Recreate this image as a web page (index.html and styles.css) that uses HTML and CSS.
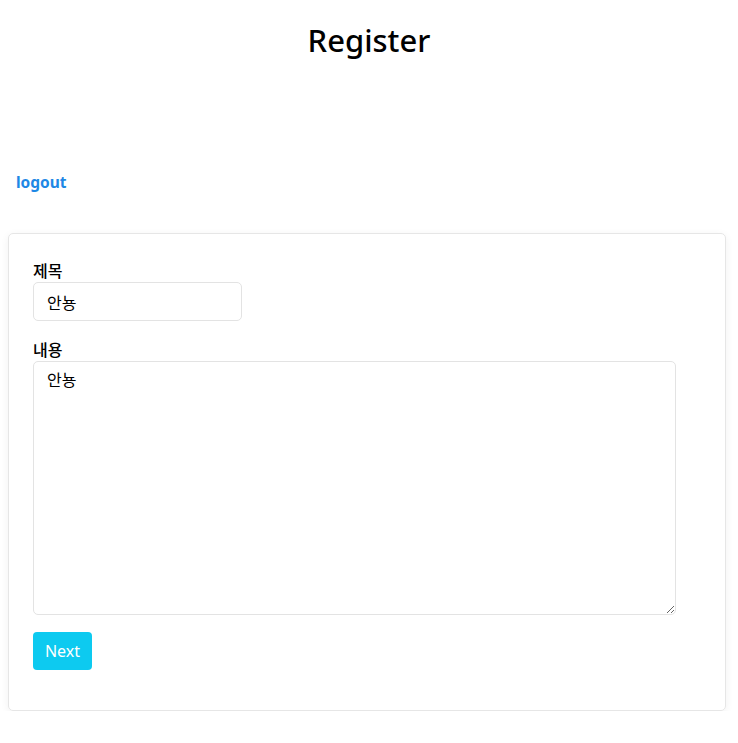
FILE: index.html
```html
<!DOCTYPE html>
<html lang="ko">
<head>
<meta charset="utf-8">
<title>Register</title>
<link rel="stylesheet" href="styles.css">
</head>
<body>
<h1 class="title">Register</h1>
<nav class="nav">
  <a class="logout" href="#">logout</a>
</nav>
<form class="card">
  <label class="label" for="title">제목</label>
  <input class="input" id="title" type="text" value="안뇽">
  <label class="label label-second" for="content">내용</label>
  <textarea class="textarea" id="content">안뇽</textarea>
  <button class="btn" type="button">Next</button>
</form>
</body>
</html>
```
FILE: styles.css
```css
html, body {
  margin: 0;
  padding: 0;
  background: #fff;
}
body {
  padding: 0 8px;
  font-family: "Noto Sans", "Noto Sans CJK KR", sans-serif;
  font-size: 16px;
  color: #000;
}
.title {
  margin: 0;
  padding-top: 18px;
  height: 46px;
  text-align: center;
  font-size: 31px;
  font-weight: 500;
  line-height: 44px;
}
.nav {
  padding: 107px 0 0 8px;
  height: 62px;
}
.logout {
  color: #1e88e5;
  font-weight: 700;
  text-decoration: none;
  font-size: 15.5px;
  line-height: 22px;
}
.card {
  display: flex;
  flex-direction: column;
  align-items: flex-start;
  margin-right: 4px;
  border: 1px solid #e6e6e6;
  border-radius: 5px;
  box-shadow: 0 2px 8px rgba(0, 0, 0, 0.06);
  padding: 25px 24px 40px;
}
.label {
  font-family: "Noto Sans CJK KR", "Noto Sans", sans-serif;
  font-size: 16px;
  font-weight: 500;
  line-height: 23px;
  margin-bottom: 0;
}
.label-second {
  margin-top: 17px;
}
.input,
.textarea {
  font-family: "Noto Sans", "Noto Sans CJK KR", sans-serif;
  font-size: 16px;
  color: #000;
  border: 1px solid #e3e3e3;
  border-radius: 5px;
  box-sizing: border-box;
  outline: none;
  background: #fff;
}
.input {
  width: 209px;
  height: 39px;
  padding: 0 13px;
}
.textarea {
  width: 643px;
  height: 254px;
  padding: 7px 13px;
  line-height: 22px;
  resize: both;
}
.btn {
  margin-top: 17px;
  background: #0dcaf0;
  border: none;
  border-radius: 4px;
  color: #fff;
  font-family: "Noto Sans", sans-serif;
  font-size: 16px;
  height: 38px;
  width: 59px;
  padding: 0;
  cursor: pointer;
}
```
